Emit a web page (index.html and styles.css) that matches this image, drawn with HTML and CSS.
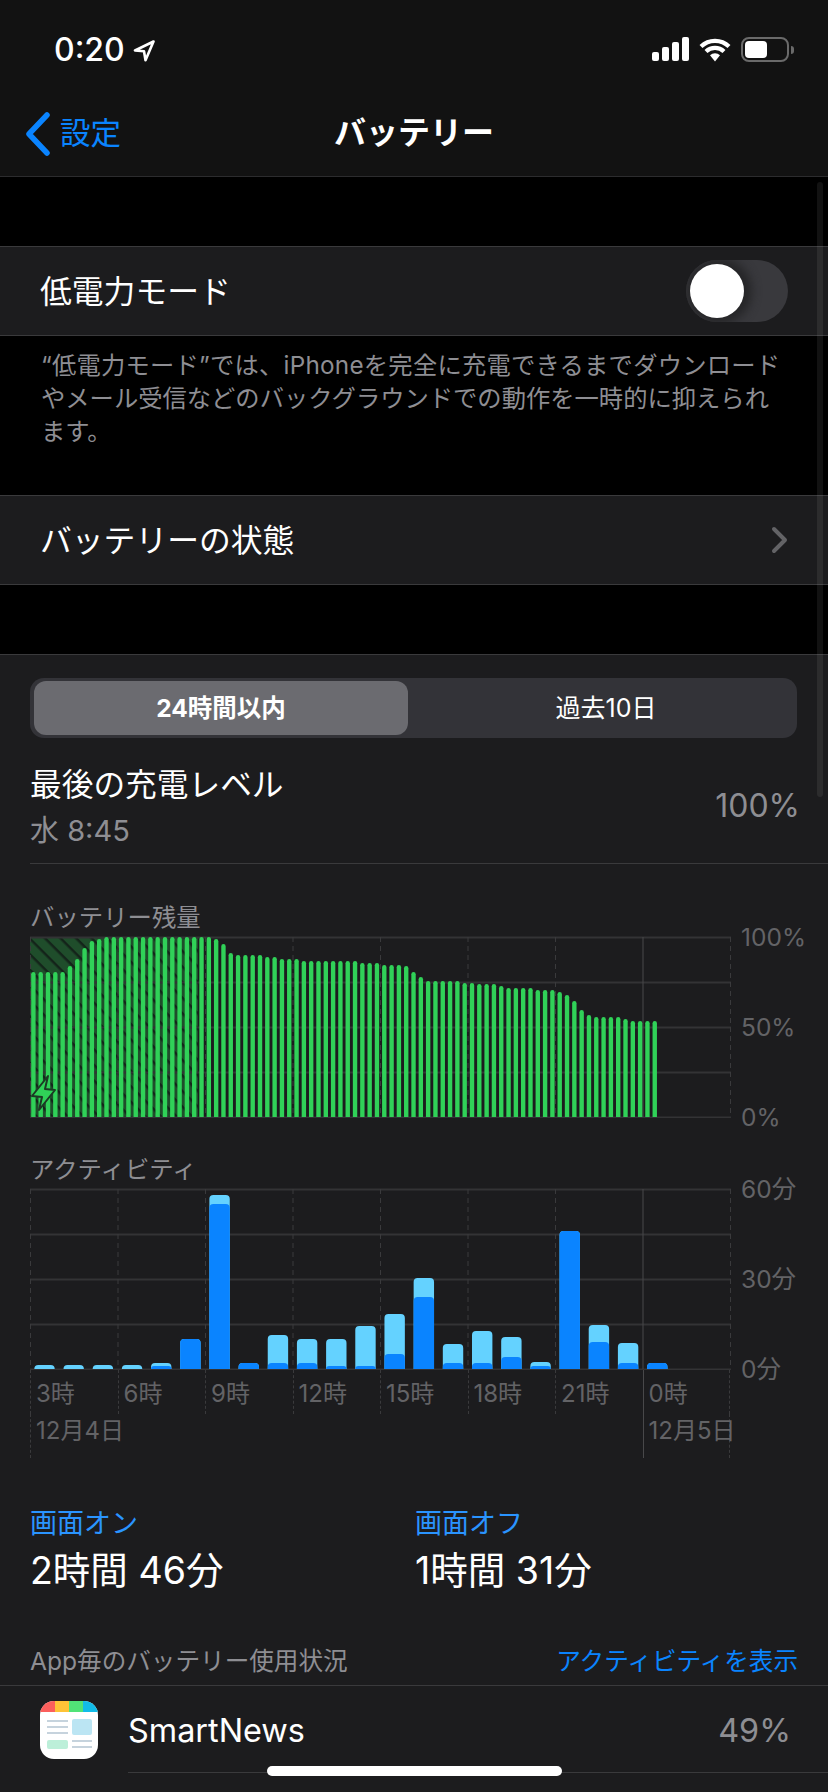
FILE: index.html
```html
<!DOCTYPE html>
<html lang="ja">
<head>
    <meta charset="UTF-8">
    <meta name="viewport" content="width=device-width, initial-scale=1.0">
    <title>バッテリー</title>
    <link rel="stylesheet" href="styles.css">
</head>
<body>
    <div class="screen">
        <header class="top-bars">
            <div class="status-bar">
                <div class="status-time">
                    <span>0:20</span>
                    <svg class="location-arrow" width="22" height="22" viewBox="0 0 22 22"><path d="M20.5 1.5 2 10.5l9 .8 1.5 9z" fill="none" stroke="#fff" stroke-width="2.6" stroke-linejoin="round"/></svg>
                </div>
                <div class="status-icons">
                    <div class="signal"><i class="s1"></i><i class="s2"></i><i class="s3"></i><i class="s4"></i></div>
                    <svg width="32" height="25" viewBox="0 0 32 25"><path d="M2 9.5a20 20 0 0 1 28 0M7 14.5a13 13 0 0 1 18 0" fill="none" stroke="#fff" stroke-width="4.2" stroke-linecap="butt"/><path d="M11 18.2a7.5 7.5 0 0 1 10 0L16 24.5z" fill="#fff"/></svg>
                    <div class="battery-icon"><div class="battery-body"><div class="battery-fill"></div></div><div class="battery-nub"></div></div>
                </div>
            </div>
            <nav class="nav-bar">
                <a class="back-link" href="#">
                    <svg width="26" height="44" viewBox="0 0 26 44"><path d="M22 3 4 22l18 19" fill="none" stroke="#0a84ff" stroke-width="5.5" stroke-linecap="round" stroke-linejoin="round"/></svg>
                    <span>設定</span>
                </a>
                <h1>バッテリー</h1>
            </nav>
        </header>

        <div class="gap gap-first"></div>
        <div class="row">
            <span>低電力モード</span>
            <div class="toggle"><div class="knob"></div></div>
        </div>
        <p class="footnote"><span class="footnote-first">“低電力モード”では、iPhoneを完全に充電できるまでダウンロード</span><br>やメール受信などのバックグラウンドでの動作を一時的に抑えられ<br>ます。</p>
        <div class="row">
            <span>バッテリーの状態</span>
            <svg class="chevron" width="18" height="28" viewBox="0 0 18 28"><path d="M3 3l11 11L3 25" fill="none" stroke="#636366" stroke-width="4" stroke-linecap="round" stroke-linejoin="round"/></svg>
        </div>
        <div class="gap gap-second"></div>

        <section class="usage">
            <div class="segmented">
                <div class="segment selected">24時間以内</div>
                <div class="segment segment-other">過去10日</div>
            </div>

            <div class="last-charge">
                <div>
                    <div class="last-charge-title">最後の充電レベル</div>
                    <div class="last-charge-time">水 8:45</div>
                </div>
                <div class="last-charge-value">100%</div>
            </div>

            <div class="chart chart-battery">
                <div class="chart-title">バッテリー残量</div>
                <div class="chart-main">
                    <svg id="batteryChart" class="plot" width="702" height="182" viewBox="0 0 702 182"></svg>
                    <div class="y-axis"><span>100%</span><span>50%</span><span>0%</span></div>
                </div>
            </div>

            <div class="chart chart-activity">
                <div class="chart-title">アクティビティ</div>
                <div class="chart-main">
                    <svg id="activityChart" class="plot" width="702" height="182" viewBox="0 0 702 182"></svg>
                    <div class="y-axis"><span>60分</span><span>30分</span><span>0分</span></div>
                </div>
                <div class="x-axis">
                    <div>3時</div><div>6時</div><div>9時</div><div>12時</div><div>15時</div><div>18時</div><div>21時</div><div class="now">0時</div>
                </div>
                <div class="x-dates">
                    <div>12月4日</div>
                    <div class="now">12月5日</div>
                </div>
            </div>

            <div class="stats">
                <div class="stat">
                    <div class="stat-label">画面オン</div>
                    <div class="stat-value">2時間 46分</div>
                </div>
                <div class="stat">
                    <div class="stat-label">画面オフ</div>
                    <div class="stat-value">1時間 31分</div>
                </div>
            </div>

            <div class="app-header">
                <span>App毎のバッテリー使用状況</span>
                <a href="#">アクティビティを表示</a>
            </div>
            <div class="app-row">
                <svg class="app-icon" width="58" height="58" viewBox="0 0 58 58">
                    <defs><clipPath id="iconClip"><rect width="58" height="58" rx="14"/></clipPath></defs>
                    <g clip-path="url(#iconClip)">
                        <rect width="58" height="58" fill="#fff"/>
                        <rect width="15" height="11" fill="#fb5f5c"/>
                        <rect x="15" width="14" height="11" fill="#fec337"/>
                        <rect x="29" width="14" height="11" fill="#51e377"/>
                        <rect x="43" width="15" height="11" fill="#12bce8"/>
                        <rect x="7" y="19" width="21" height="2" fill="#c6d3dd"/>
                        <rect x="7" y="25" width="21" height="2" fill="#c6d3dd"/>
                        <rect x="7" y="31" width="21" height="2" fill="#c6d3dd"/>
                        <rect x="32" y="18" width="20" height="16" rx="2" fill="#bbe5f3"/>
                        <rect x="7" y="39" width="21" height="9" rx="2" fill="#bcefd9"/>
                        <rect x="32" y="39" width="20" height="2" fill="#c6d3dd"/>
                        <rect x="32" y="45" width="20" height="2" fill="#c6d3dd"/>
                    </g>
                </svg>
                <div class="app-info">
                    <span>SmartNews</span>
                    <span class="app-percent">49%</span>
                </div>
            </div>
        </section>

        <div class="scroll-indicator"></div>
        <div class="home-indicator"></div>
    </div>

    <script src="chart.js"></script>
</body>
</html>
```

FILE: styles.css
```css
* {
    box-sizing: border-box;
}
html, body {
    margin: 0;
    padding: 0;
    background: #000;
}
body {
    font-family: Inter, "Noto Sans CJK JP", sans-serif;
    color: #fff;
}
a {
    text-decoration: none;
}
.screen {
    position: relative;
    width: 828px;
    height: 1792px;
    overflow: hidden;
    background: #000;
}

/* top bars */
.top-bars {
    background: #121212;
    border-bottom: 1px solid #2c2c2e;
}
.status-bar {
    display: flex;
    justify-content: space-between;
    height: 88px;
    padding: 34px 34px 0 54px;
}
.status-time {
    display: flex;
    align-items: flex-start;
    gap: 8px;
    font-size: 32px;
    font-weight: 500;
    line-height: 32px;
}
.location-arrow {
    margin-top: 6px;
}
.status-icons {
    display: flex;
    align-items: flex-start;
    gap: 10px;
    padding-top: 3px;
}
.signal {
    display: flex;
    align-items: flex-end;
    gap: 3px;
    height: 24px;
}
.signal i {
    display: block;
    width: 7px;
    background: #fff;
    border-radius: 2px;
}
.s1 { height: 9px; }
.s2 { height: 14px; }
.s3 { height: 19px; }
.s4 { height: 24px; }
.battery-icon {
    display: flex;
    align-items: center;
    gap: 2px;
    height: 25px;
}
.battery-body {
    width: 48px;
    height: 25px;
    padding: 2px;
    border: 2px solid #6a6a6a;
    border-radius: 8px;
}
.battery-fill {
    width: 22px;
    height: 17px;
    background: #fff;
    border-radius: 4px;
}
.battery-nub {
    width: 3px;
    height: 8px;
    background: #6a6a6a;
    border-radius: 0 3px 3px 0;
}
.nav-bar {
    position: relative;
    display: flex;
    align-items: center;
    justify-content: center;
    height: 88px;
    padding-bottom: 4px;
}
.nav-bar h1 {
    margin: 0;
    font-size: 32px;
    font-weight: 700;
}
.back-link {
    position: absolute;
    left: 25px;
    top: 20px;
    display: flex;
    align-items: center;
    gap: 9px;
    color: #0a84ff;
    font-size: 30.5px;
}
.back-link svg {
    margin-top: 4px;
}
.back-link span {
    margin-top: -2px;
}

/* list */
.gap {
    background: #000;
}
.gap-first {
    height: 69px;
}
.gap-second {
    height: 69px;
}
.row {
    display: flex;
    align-items: center;
    justify-content: space-between;
    height: 90px;
    padding: 0 40px;
    background: #1c1c1e;
    border-top: 1px solid #3a3a3c;
    border-bottom: 1px solid #3a3a3c;
    font-size: 31.8px;
}
.row span {
    padding-bottom: 5px;
}
.toggle {
    position: relative;
    width: 102px;
    height: 62px;
    overflow: hidden;
    background: #39393d;
    border-radius: 31px;
}
.knob {
    position: absolute;
    left: 4px;
    top: 4px;
    width: 54px;
    height: 54px;
    background: #fff;
    border-radius: 50%;
    box-shadow: 2px 0 10px 6px #262628;
}
.chevron {
    margin-right: -1px;
}
.footnote {
    height: 159px;
    margin: 0;
    padding: 13px 41px 0;
    font-size: 24.3px;
    line-height: 33px;
    color: #8e8e93;
}
.footnote-first {
    letter-spacing: 0.23px;
}

/* usage section */
.usage {
    height: 1138px;
    padding-top: 23px;
    background: #1c1c1e;
    border-top: 1px solid #3a3a3c;
}
.segmented {
    display: flex;
    height: 60px;
    margin: 0 31px 0 30px;
    padding: 3px 4px;
    background: #333338;
    border-radius: 14px;
}
.segment {
    display: flex;
    align-items: center;
    justify-content: center;
    flex: 1;
    padding-bottom: 4px;
    font-size: 25px;
}
.segment.selected {
    flex: 0 0 374px;
    background: #6b6b70;
    border-radius: 12px;
    font-size: 24.5px;
    font-weight: 700;
}
.segment-other {
    padding-left: 11px;
}
.last-charge {
    display: flex;
    justify-content: space-between;
    height: 126px;
    margin-left: 30px;
    padding: 27px 28px 0 0;
    border-bottom: 1px solid #3a3a3c;
}
.last-charge-title {
    font-size: 31.7px;
    line-height: 40px;
}
.last-charge-time {
    margin-top: 9px;
    font-size: 29px;
    line-height: 34px;
    color: #8e8e93;
}
.last-charge-value {
    align-self: center;
    margin-top: -17px;
    font-size: 32px;
    color: #8e8e93;
}

/* charts */
.chart {
    padding-left: 30px;
}
.chart-title {
    height: 36px;
    font-size: 24.4px;
    line-height: 32px;
    color: #8e8e93;
}
.chart-battery {
    margin-top: 37px;
}
.chart-activity {
    margin-top: 35px;
}
.chart-main {
    display: flex;
    height: 181px;
}
.plot {
    display: block;
    flex: none;
    margin-top: -1px;
    margin-left: -1px;
}
.y-axis {
    display: flex;
    flex-direction: column;
    justify-content: space-between;
    height: 180px;
    margin-left: 10px;
    font-size: 24.5px;
    color: #636366;
}
.chart-activity .y-axis {
    margin-top: -2px;
}
.y-axis span {
    display: flex;
    align-items: center;
    height: 0;
}
.x-axis {
    display: grid;
    grid-template-columns: repeat(8, 87.5px);
    width: 701px;
    height: 44px;
}
.x-axis div {
    padding: 8px 0 0 5px;
    border-left: 1px dashed #3a3a3c;
    font-size: 24px;
    line-height: 32px;
    color: #636366;
}
.x-axis .now {
    border-left: 1px solid #48484a;
    border-right: 1px dashed #3a3a3c;
}
.x-dates {
    display: grid;
    grid-template-columns: 612.5px 87.5px;
    width: 701px;
    height: 44px;
}
.x-dates div {
    padding: 0 0 0 5px;
    border-left: 1px dashed #3a3a3c;
    font-size: 24px;
    line-height: 34px;
    color: #636366;
    white-space: nowrap;
}
.x-dates .now {
    border-left: 1px solid #48484a;
    border-right: 1px dashed #3a3a3c;
}

/* totals */
.stats {
    display: flex;
    margin-top: 48px;
    padding-left: 30px;
}
.stat {
    flex: 0 0 385px;
}
.stat-label {
    font-size: 27px;
    line-height: 36px;
    color: #2a94ff;
}
.stat-value {
    margin-top: 6px;
    font-size: 37.5px;
    line-height: 46px;
}

/* per app */
.app-header {
    display: flex;
    justify-content: space-between;
    align-items: center;
    height: 40px;
    margin-top: 45px;
    padding: 0 30px;
    font-size: 24.6px;
    color: #8e8e93;
}
.app-header a {
    color: #0a84ff;
}
.app-row {
    display: flex;
    height: 88px;
    margin-top: 6px;
    padding-left: 40px;
    border-top: 1px solid #3a3a3c;
}
.app-icon {
    flex: none;
    margin-top: 15px;
}
.app-info {
    display: flex;
    align-items: center;
    justify-content: space-between;
    flex: 1;
    margin-left: 30px;
    padding: 3px 37px 0 0;
    border-bottom: 1px solid #3a3a3c;
    font-size: 32.4px;
}
.app-percent {
    color: #8e8e93;
}

/* overlays */
.scroll-indicator {
    position: absolute;
    left: 817px;
    top: 182px;
    width: 6px;
    height: 615px;
    background: rgba(255, 255, 255, 0.07);
    border-radius: 3px;
}
.home-indicator {
    position: absolute;
    left: 267px;
    top: 1766px;
    width: 295px;
    height: 10px;
    background: #fff;
    border-radius: 5px;
}
```

FILE: chart.js
```js
const SVG_NS = 'http://www.w3.org/2000/svg';
const GRID = '#333335';
const CHART_BOTTOM = 181;

// tops of the bars as measured, 0 is the top line of the chart
const batteryDrops = [
    35, 35, 35, 35, 35, 29, 22, 11, 4, 2, 0, 0, 0, 0, 0, 0, 0, 0, 0, 0, 0, 0, 0, 0, 0,
    2, 7, 16, 18, 18, 18, 18, 20, 20, 22, 22, 22, 24, 24, 24, 24, 24, 24, 24, 24,
    26, 26, 26, 28, 28, 28, 29, 35, 40, 44, 44, 44, 44, 44, 46, 46, 47, 47, 47, 49,
    51, 51, 51, 51, 53, 53, 53, 55, 58, 64, 73, 78, 80, 80, 80, 80, 82, 84, 84, 84, 84
];

// total and dark part of each hour, in pixels
const activity = [
    [4, 0], [4, 0], [4, 0], [4, 0], [6, 3], [30, 30], [174, 165], [6, 6],
    [34, 6], [30, 6], [30, 3], [43, 3], [55, 15], [91, 72], [25, 6], [38, 6],
    [32, 12], [7, 3], [138, 138], [44, 27], [26, 6], [6, 6]
];

function add(svg, name, attrs) {
    const el = document.createElementNS(SVG_NS, name);
    Object.keys(attrs).forEach((key) => el.setAttribute(key, attrs[key]));
    svg.appendChild(el);
    return el;
}

function drawGrid(svg) {
    for (let i = 0; i <= 4; i++) {
        const y = 1.5 + i * 45;
        add(svg, 'line', { x1: 1, x2: 702, y1: y, y2: y, stroke: GRID, 'stroke-width': 2 });
    }
    for (let i = 0; i <= 8; i++) {
        const x = 1.5 + i * 87.5;
        const now = i === 7;
        add(svg, 'line', {
            x1: x, x2: x, y1: 1, y2: CHART_BOTTOM,
            stroke: now ? '#48484a' : '#3a3a3c',
            'stroke-dasharray': now ? 'none' : '5 4'
        });
    }
}

function drawBattery(svg) {
    const defs = add(svg, 'defs', {});
    const pattern = add(defs, 'pattern', {
        id: 'chargeHatch', width: 11, height: 11,
        patternUnits: 'userSpaceOnUse', patternTransform: 'rotate(45)'
    });
    add(pattern, 'rect', { width: 11, height: 11, fill: '#1f4d2b' });
    add(pattern, 'rect', { width: 11, height: 2.5, fill: '#14241a' });

    add(svg, 'rect', { x: 1, y: 1, width: 168, height: 180, fill: 'url(#chargeHatch)' });
    drawGrid(svg);

    batteryDrops.forEach((top, i) => {
        const x = 2.2 + i * 7.31;
        const y = top + 1;
        add(svg, 'path', {
            d: `M${x} ${CHART_BOTTOM}V${y + 2.2}a2.2 2.2 0 0 1 4.4 0V${CHART_BOTTOM}z`,
            fill: '#30d158'
        });
    });

    add(svg, 'path', {
        d: 'M19 140 3 160l10 1-3 13 16-20-10-1z',
        fill: '#30d158', stroke: '#1c3a24', 'stroke-width': 2, 'stroke-linejoin': 'round'
    });
}

function bar(svg, x, height, color) {
    const w = 20.4;
    const y = CHART_BOTTOM - height;
    const r = Math.min(4, height);
    add(svg, 'path', {
        d: `M${x} ${y + height}V${y + r}a${r} ${r} 0 0 1 ${r} -${r}H${x + w - r}a${r} ${r} 0 0 1 ${r} ${r}V${y + height}z`,
        fill: color
    });
}

function drawActivity(svg) {
    drawGrid(svg);
    activity.forEach((hour, i) => {
        const x = 5.3 + i * 29.18;
        bar(svg, x, hour[0], '#64d2ff');
        if (hour[1] > 0) {
            bar(svg, x, hour[1], '#0a84ff');
        }
    });
}

drawBattery(document.getElementById('batteryChart'));
drawActivity(document.getElementById('activityChart'));
```
